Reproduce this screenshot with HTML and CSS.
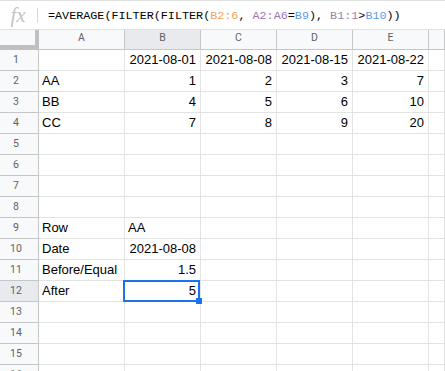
FILE: index.html
```html
<!DOCTYPE html>
<html>
<head>
<meta charset="utf-8">
<link rel="stylesheet" href="styles.css">
</head>
<body>
<div class="fbar">
  <div class="fx">fx</div>
  <div class="sep"></div>
  <div class="formula">=AVERAGE(FILTER(FILTER(<span class="r1">B2:6</span>, <span class="r2">A2:A6</span>=<span class="r3">B9</span>), <span class="r4">B1:1</span>&gt;<span class="r5">B10</span>))</div>
</div>
<div class="sheet">
  <div class="corner"></div>
  <div class="ch">A</div><div class="ch sel">B</div><div class="ch">C</div><div class="ch">D</div><div class="ch">E</div><div class="ch"></div>

  <div class="rh">1</div><div class="c"></div><div class="c n">2021-08-01</div><div class="c n">2021-08-08</div><div class="c n">2021-08-15</div><div class="c n">2021-08-22</div><div class="c"></div>
  <div class="rh">2</div><div class="c">AA</div><div class="c n">1</div><div class="c n">2</div><div class="c n">3</div><div class="c n">7</div><div class="c"></div>
  <div class="rh">3</div><div class="c">BB</div><div class="c n">4</div><div class="c n">5</div><div class="c n">6</div><div class="c n">10</div><div class="c"></div>
  <div class="rh">4</div><div class="c">CC</div><div class="c n">7</div><div class="c n">8</div><div class="c n">9</div><div class="c n">20</div><div class="c"></div>
  <div class="rh">5</div><div class="c"></div><div class="c"></div><div class="c"></div><div class="c"></div><div class="c"></div><div class="c"></div>
  <div class="rh">6</div><div class="c"></div><div class="c"></div><div class="c"></div><div class="c"></div><div class="c"></div><div class="c"></div>
  <div class="rh">7</div><div class="c"></div><div class="c"></div><div class="c"></div><div class="c"></div><div class="c"></div><div class="c"></div>
  <div class="rh">8</div><div class="c"></div><div class="c"></div><div class="c"></div><div class="c"></div><div class="c"></div><div class="c"></div>
  <div class="rh">9</div><div class="c">Row</div><div class="c">AA</div><div class="c"></div><div class="c"></div><div class="c"></div><div class="c"></div>
  <div class="rh">10</div><div class="c">Date</div><div class="c n">2021-08-08</div><div class="c"></div><div class="c"></div><div class="c"></div><div class="c"></div>
  <div class="rh">11</div><div class="c">Before/Equal</div><div class="c n">1.5</div><div class="c"></div><div class="c"></div><div class="c"></div><div class="c"></div>
  <div class="rh sel">12</div><div class="c">After</div><div class="c n active">5<span class="selbox"><span class="handle"></span></span></div><div class="c"></div><div class="c"></div><div class="c"></div><div class="c"></div>
  <div class="rh">13</div><div class="c"></div><div class="c"></div><div class="c"></div><div class="c"></div><div class="c"></div><div class="c"></div>
  <div class="rh">14</div><div class="c"></div><div class="c"></div><div class="c"></div><div class="c"></div><div class="c"></div><div class="c"></div>
  <div class="rh">15</div><div class="c"></div><div class="c"></div><div class="c"></div><div class="c"></div><div class="c"></div><div class="c"></div>
  <div class="rh">16</div><div class="c"></div><div class="c"></div><div class="c"></div><div class="c"></div><div class="c"></div><div class="c"></div>
</div>
</body>
</html>
```

FILE: styles.css
```css
html, body {
  margin: 0;
  padding: 0;
  background: #ffffff;
  width: 445px;
  height: 371px;
  overflow: hidden;
}

body {
  font-family: "Liberation Sans", Arial, sans-serif;
}

.fbar {
  box-sizing: border-box;
  height: 30px;
  border-top: 1px solid #e0e0e0;
  border-bottom: 1px solid #e0e0e0;
  display: flex;
  align-items: center;
}

.fx {
  width: 37px;
  text-align: center;
  font-family: "Liberation Serif", "Times New Roman", serif;
  font-style: italic;
  font-size: 21px;
  color: #c4c4c4;
  line-height: 20px;
  padding-right: 1px;
  box-sizing: border-box;
}

.sep {
  width: 1px;
  height: 15px;
  background: #d6d6d6;
}

.formula {
  margin-left: 10px;
  font-family: "Liberation Mono", "DejaVu Sans Mono", monospace;
  font-size: 11.75px;
  color: #000000;
  white-space: nowrap;
  padding-top: 1px;
}

.r1 { color: #f0a25a; }
.r2 { color: #9e74b0; }
.r3 { color: #5d9bea; }
.r4 { color: #9a7fb0; }
.r5 { color: #5d9bea; }

.sheet {
  display: grid;
  grid-template-columns: 39px 86px 76px 76px 76px 76px 1fr;
  grid-template-rows: 20px;
  grid-auto-rows: 21px;
}

.corner {
  box-sizing: border-box;
  background: #f8f9fa;
  border-right: 4px solid #c0c0c0;
  border-bottom: 5px solid #c0c0c0;
}

.ch {
  box-sizing: border-box;
  background: #f8f9fa;
  border-right: 1px solid #c4c7c5;
  border-bottom: 1px solid #c4c7c5;
  font-family: Roboto, "Liberation Sans", sans-serif;
  font-size: 10.5px;
  color: #5f6368;
  text-align: center;
  line-height: 16px;
}

.rh {
  box-sizing: border-box;
  background: #f8f9fa;
  border-right: 1px solid #c4c7c5;
  border-bottom: 1px solid #c4c7c5;
  font-family: Roboto, "Liberation Sans", sans-serif;
  font-size: 10.5px;
  color: #5f6368;
  text-align: center;
  padding-right: 6px;
  line-height: 20px;
}

.sel {
  background: #e8eaed;
}

.c {
  box-sizing: border-box;
  border-right: 1px solid #e2e3e3;
  border-bottom: 1px solid #e2e3e3;
  font-size: 13px;
  color: #000000;
  line-height: 20px;
  padding: 0 4px 0 3px;
  white-space: nowrap;
  overflow: visible;
}

.n {
  text-align: right;
}

.active {
  position: relative;
}

.selbox {
  position: absolute;
  box-sizing: border-box;
  top: -1px;
  left: -2px;
  right: 0;
  bottom: -1px;
  border: 2px solid #1a73e8;
}

.handle {
  position: absolute;
  width: 6px;
  height: 6px;
  right: -4px;
  bottom: -4px;
  background: #1a73e8;
}
```
